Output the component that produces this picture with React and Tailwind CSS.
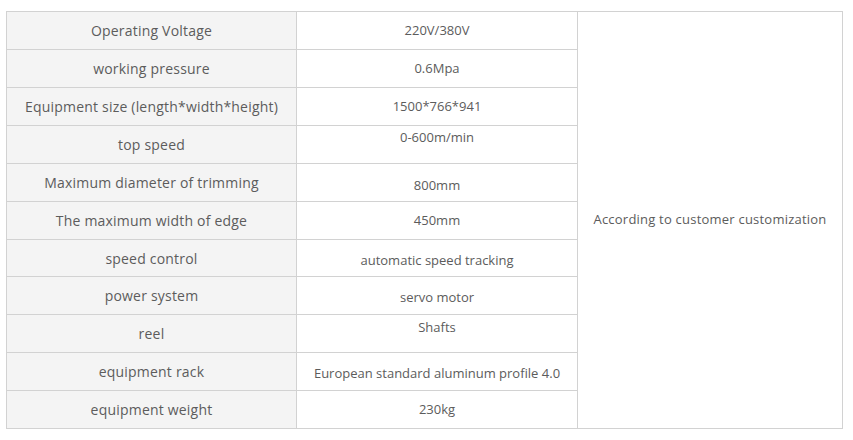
const rows = [
  { label: "Operating Voltage", value: "220V/380V", h: "h-[37px]", pad: "" },
  { label: "working pressure", value: "0.6Mpa", h: "h-[37px]", pad: "" },
  { label: "Equipment size (length*width*height)", value: "1500*766*941", h: "h-[37px]", pad: "" },
  { label: "top speed", value: "0-600m/min", h: "h-[37px]", pad: "pb-[13px]" },
  { label: "Maximum diameter of trimming", value: "800mm", h: "h-[37px]", pad: "pt-[6px]" },
  { label: "The maximum width of edge", value: "450mm", h: "h-[37px]", pad: "" },
  { label: "speed control", value: "automatic speed tracking", h: "h-[36px]", pad: "pt-[5px]" },
  { label: "power system", value: "servo motor", h: "h-[37px]", pad: "pt-[5px]" },
  { label: "reel", value: "Shafts", h: "h-[37px]", pad: "pb-[12px]" },
  { label: "equipment rack", value: "European standard aluminum profile 4.0", h: "h-[37px]", pad: "pt-[4px]" },
  { label: "equipment weight", value: "230kg", h: "h-[37px]", pad: "" },
];

export default function App() {
  return (
    <div className="w-[853px] h-[440px] bg-white pl-[6px] pt-[11px] font-['Open_Sans',sans-serif] text-[#5c5c5c]">
      <div className="w-[837px] bg-[#d2d2d2] p-px grid grid-cols-[289px_280px_264px] gap-px">
        {rows.map((r, i) => (
          <div key={r.label} className="contents">
            <div
              className={`${r.h} bg-[#f4f4f4] flex items-center justify-center text-[14px] tracking-[0.2px]`}
              style={{ gridRow: i + 1, gridColumn: 1 }}
            >
              {r.label}
            </div>
            <div
              className={`${r.h} ${r.pad} bg-white flex items-center justify-center text-[13px]`}
              style={{ gridRow: i + 1, gridColumn: 2 }}
            >
              {r.value}
            </div>
          </div>
        ))}
        <div className="row-start-1 row-span-11 col-start-3 bg-white flex items-center justify-center text-[13px] tracking-[0.22px]">
          According to customer customization
        </div>
      </div>
    </div>
  );
}
